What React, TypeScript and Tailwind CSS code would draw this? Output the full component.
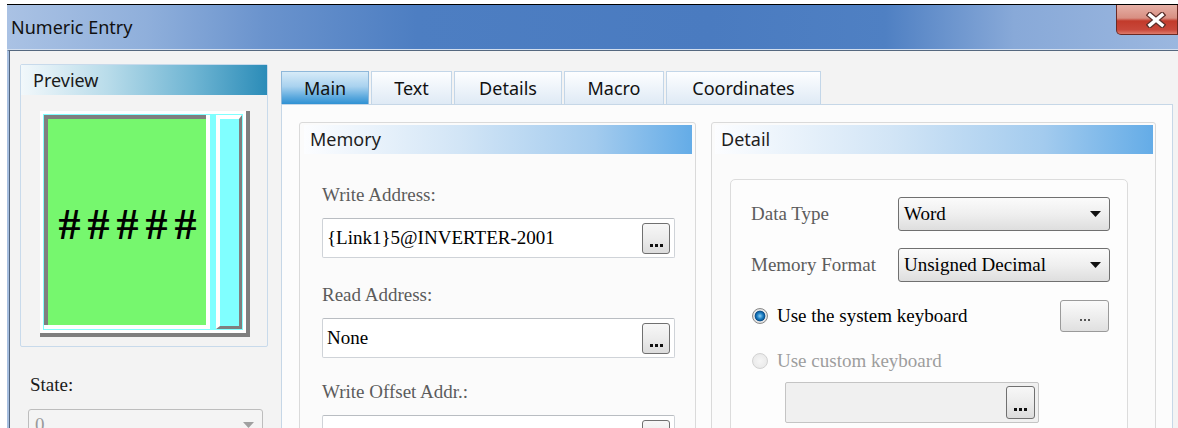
import React from "react";

const serif = "font-['Liberation_Serif','Times_New_Roman',serif]";

function CloseButton() {
  return (
    <div className="w-[62px] h-[30px] shrink-0 rounded-bl-[5px] border border-t-0 border-[#6b2a24] bg-[linear-gradient(180deg,#e6b0a6_0%,#d88f82_45%,#c23a2b_55%,#c8473a_85%,#de7b6c_100%)] flex items-center justify-center">
      <svg width="20" height="16" viewBox="0 0 20 16" className="ml-[18px]">
        <path d="M4 3 L16 13 M16 3 L4 13" stroke="#5a2f2a" strokeWidth="6" strokeLinecap="square" />
        <path d="M4 3 L16 13 M16 3 L4 13" stroke="#ffffff" strokeWidth="3.5" strokeLinecap="square" />
      </svg>
    </div>
  );
}

function Dots({ small }: { small?: boolean }) {
  return (
    <div className="flex gap-[2px]">
      {[0, 1, 2].map((i) => (
        <span
          key={i}
          className={small ? "w-[2px] h-[2px] bg-[#555]" : "w-[3px] h-[3px] bg-[#111]"}
        />
      ))}
    </div>
  );
}

function BrowseButton() {
  return (
    <div className="w-[28px] h-[31px] rounded-[3px] border border-[#707070] bg-[linear-gradient(180deg,#f7f7f7_0%,#ececec_50%,#dcdcdc_100%)] flex items-end justify-center pb-[6px]">
      <Dots />
    </div>
  );
}

function AddressField({ value }: { value: string }) {
  return (
    <div className="mt-[12px] w-[353px] h-[40px] bg-white border border-[#cfd3d8] border-t-[#b9bdc2] rounded-[2px] flex items-center justify-between pl-[4px] pr-[4px]">
      <span className={`${serif} text-[19px] text-black`}>{value}</span>
      <BrowseButton />
    </div>
  );
}

function FieldLabel({ children, top }: { children: React.ReactNode; top: string }) {
  return (
    <div className={`${serif} ${top} text-[19px] leading-[22px] text-[#5c5c5c]`}>{children}</div>
  );
}

function DropDown({ value }: { value: string }) {
  return (
    <div className="w-[212px] h-[34px] rounded-[3px] border border-[#707070] bg-[linear-gradient(180deg,#fbfbfb_0%,#efefef_50%,#dedede_100%)] flex items-center justify-between pl-[5px] pr-[8px]">
      <span className={`${serif} text-[19px] text-black`}>{value}</span>
      <svg width="11" height="6" viewBox="0 0 11 6">
        <path d="M0 0 H11 L5.5 6 Z" fill="#111" />
      </svg>
    </div>
  );
}

function GroupHeader({ title }: { title: string }) {
  return (
    <div className="h-[29px] pl-[6px] text-[18px] leading-[29px] text-[#1e1e1e] bg-[linear-gradient(90deg,#fcfdff_0%,#d2e5f6_40%,#a3cbee_75%,#64ace7_100%)]">
      {title}
    </div>
  );
}

const tabs = [
  { name: "Main", w: "w-[88px]" },
  { name: "Text", w: "w-[81px]" },
  { name: "Details", w: "w-[108px]" },
  { name: "Macro", w: "w-[100px]" },
  { name: "Coordinates", w: "w-[155px]" },
];

function PreviewPanel() {
  return (
    <div className="w-[248px] h-[283px] border border-[#c8daeb] rounded-[2px] bg-[#f3f3f3]">
      <div className="h-[30px] pl-[12px] text-[18px] leading-[30px] text-[#1a1a1a] bg-[linear-gradient(90deg,#f2f8fb_0%,#b9dcea_35%,#6fb5d3_70%,#2b8cb8_100%)]">
        Preview
      </div>
      {/* numeric entry sample: bevelled green display with a cyan side bar */}
      <div className="ml-[19px] mt-[16px] w-[210px] h-[226px] bg-white border-r-[4px] border-b-[4px] border-[#7f7f7f] p-[3px]">
        <div className="h-full bg-[#80ffff] p-[1px] flex gap-[6px]">
          <div className="flex-1 min-w-0 bg-white pr-[4px] pb-[4px]">
            <div className="h-full overflow-hidden bg-[#76f76e] border-t-[4px] border-l-[4px] border-[#7f7f7f] flex items-center justify-center">
              <span className={`${serif} text-[44px] leading-none font-bold tracking-[7px] pl-[8px] mt-[6px] text-black`}>
                #####
              </span>
            </div>
          </div>
          <div className="w-[26px] shrink-0 bg-[#80ffff] border-l-[4px] border-t-[4px] border-white border-r-[3px] border-b-[3px] border-r-[#7f7f7f] border-b-[#7f7f7f]" />
        </div>
      </div>
    </div>
  );
}

export default function App() {
  return (
    <div className="w-[1178px] h-[428px] overflow-hidden bg-white pt-[4px] pl-[7px] font-['Noto_Sans','Open_Sans',sans-serif]">
      <div className="h-full border-t border-black flex flex-col">
        {/* title bar */}
        <div className="h-[45px] shrink-0 flex justify-between items-start bg-[linear-gradient(90deg,#aac2e4_0%,#8fafdb_12%,#6a93cd_22%,#4d7ec2_35%,#4a7bc0_60%,#4f80c3_75%,#88a9d8_86%,#9bb7df_100%)] border-b border-[#d2deee]">
          <div className="self-center pl-[4px] text-[18px] text-[#111]">Numeric Entry</div>
          <CloseButton />
        </div>
        <div className="flex-1 flex border-t border-[#55687f] border-l-2 border-l-[#a7bfe0]">
          <div className="flex-1 flex border-l border-[#52647d] bg-[#f3f3f3]">
            {/* left column */}
            <div className="w-[271px] shrink-0 pl-[10px] pt-[13px]">
              <PreviewPanel />
              <div className={`${serif} ml-[10px] mt-[27px] text-[19px] leading-[22px] text-[#1a1a1a]`}>State:</div>
              <div className="ml-[8px] mt-[13px] w-[235px] h-[32px] rounded-[3px] border border-[#bdbdbd] bg-[#f4f4f4] flex items-center justify-between pl-[6px] pr-[8px]">
                <span className={`${serif} text-[19px] text-[#9a9a9a]`}>0</span>
                <svg width="11" height="6" viewBox="0 0 11 6">
                  <path d="M0 0 H11 L5.5 6 Z" fill="#a0a0a0" />
                </svg>
              </div>
            </div>

            {/* tab control */}
            <div className="flex-1 flex flex-col pt-[20px] pr-[5px]">
              <div className="flex gap-[2px] h-[33px] shrink-0">
                {tabs.map((t) =>
                  t.name === "Main" ? (
                    <div
                      key={t.name}
                      className={`${t.w} h-full border border-b-0 border-[#8fb8da] bg-[linear-gradient(180deg,#d7ebf8_0%,#a9d2ef_45%,#58a7dd_80%,#2f91d3_100%)] flex items-center pl-[22px] text-[18px] text-[#111]`}
                    >
                      {t.name}
                    </div>
                  ) : (
                    <div
                      key={t.name}
                      className={`${t.w} h-full border border-b-0 border-[#c3d6e8] bg-[linear-gradient(180deg,#fdfeff_0%,#eef4fa_50%,#dfeaf5_100%)] flex items-center justify-center text-[18px] text-[#111]`}
                    >
                      {t.name}
                    </div>
                  )
                )}
              </div>
              <div className="flex-1 border border-[#c6d7e7] bg-[#fcfcfc] flex gap-[15px] pl-[17px] pt-[17px]">
                {/* memory group */}
                <div className="w-[397px] border border-[#dadada] rounded-[3px] bg-[#fbfbfb] pl-[4px] pr-[3px] pt-[2px]">
                  <GroupHeader title="Memory" />
                  <div className="pl-[18px]">
                    <FieldLabel top="mt-[30px]">Write Address:</FieldLabel>
                    <AddressField value="{Link1}5@INVERTER-2001" />
                    <FieldLabel top="mt-[26px]">Read Address:</FieldLabel>
                    <AddressField value="None" />
                    <FieldLabel top="mt-[23px]">Write Offset Addr.:</FieldLabel>
                    <AddressField value="None" />
                  </div>
                </div>

                {/* detail group */}
                <div className="w-[445px] border border-[#dadada] rounded-[3px] bg-[#fbfbfb] pl-[3px] pr-[2px] pt-[2px]">
                  <GroupHeader title="Detail" />
                  <div className="ml-[15px] mt-[25px] w-[398px] h-[300px] border border-[#dcdcdc] rounded-[5px] bg-[#fdfdfd] pl-[20px] pt-[17px]">
                    <div className="flex items-center h-[34px]">
                      <span className={`${serif} w-[147px] text-[19px] text-[#5c5c5c]`}>Data Type</span>
                      <DropDown value="Word" />
                    </div>
                    <div className="flex items-center h-[34px] mt-[17px]">
                      <span className={`${serif} w-[147px] text-[19px] text-[#5c5c5c]`}>Memory Format</span>
                      <DropDown value="Unsigned Decimal" />
                    </div>
                    <div className="flex items-center h-[32px] mt-[18px] pr-[18px]">
                      <span className="ml-[1px] w-[16px] h-[16px] rounded-full border border-[#8a8a8a] bg-[radial-gradient(circle,#8fd0f5_0%,#1c7fc4_30%,#0b4f8a_50%,#e8e8e8_58%,#cfcfcf_100%)]" />
                      <span className={`${serif} ml-[9px] text-[19px] text-black`}>Use the system keyboard</span>
                      <div className="ml-auto w-[49px] h-[32px] rounded-[3px] border border-[#9a9a9a] bg-[linear-gradient(180deg,#fafafa_0%,#eeeeee_50%,#e0e0e0_100%)] flex items-end justify-center pb-[10px]">
                        <Dots small />
                      </div>
                    </div>
                    <div className="flex items-center h-[24px] mt-[17px]">
                      <span className="ml-[1px] w-[16px] h-[16px] rounded-full border border-[#d2d2d2] bg-[radial-gradient(circle,#f6f6f6_0%,#e6e6e6_100%)]" />
                      <span className={`${serif} ml-[9px] text-[19px] text-[#9d9d9d]`}>Use custom keyboard</span>
                    </div>
                    <div className="ml-[34px] mt-[9px] w-[254px] h-[41px] rounded-[2px] border border-[#c4c4c4] bg-[#f0f0f0] flex items-center justify-end pr-[3px]">
                      <div className="w-[29px] h-[33px] rounded-[3px] border border-[#707070] bg-[linear-gradient(180deg,#f7f7f7_0%,#ececec_50%,#dcdcdc_100%)] flex items-end justify-center pb-[7px]">
                        <Dots />
                      </div>
                    </div>
                  </div>
                </div>
              </div>
            </div>
          </div>
        </div>
      </div>
    </div>
  );
}
